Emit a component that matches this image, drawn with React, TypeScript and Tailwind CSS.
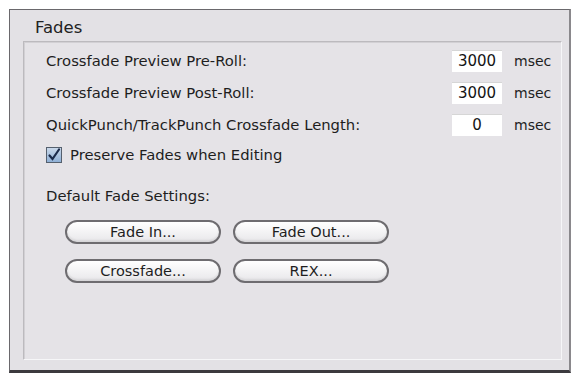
import React from "react";

// Preference rows with numeric fields
const fields = [
  { label: "Crossfade Preview Pre-Roll:", value: "3000" },
  { label: "Crossfade Preview Post-Roll:", value: "3000" },
  { label: "QuickPunch/TrackPunch Crossfade Length:", value: "0" },
];

function PillButton({ label }: { label: string }) {
  return (
    <button className="w-[156px] h-[24px] rounded-full border-2 border-[#6e6c70] bg-gradient-to-b from-white to-[#e8e7ea] text-[14.5px] text-[#1e1e1e] leading-none shadow-[inset_0_-2px_2px_rgba(0,0,0,0.08)]">
      {label}
    </button>
  );
}

export default function App() {
  return (
    <div className="w-[576px] h-[376px] bg-white pt-[9px] pl-[9px] font-['DejaVu_Sans',sans-serif]">
      <div className="w-[562px] h-[364px] bg-[#e3e1e5] border border-[#6a686c] border-b-[3px] border-b-[#3c3a3e] border-r-2 border-r-[#8a888c] pt-[5px] pl-[13px] pr-[7px] pb-[10px] flex flex-col">
        <div className="text-[16.5px] text-[#222] pl-[12px] h-[26px] leading-[26px]">Fades</div>
        <div className="flex-1 border border-[#bcbabe] border-b-[#f6f6f8] border-r-[#f6f6f8] shadow-[inset_1px_1px_0_#d2d0d4] bg-[#e5e3e7] pl-[22px] pr-[9px] pt-[8px]">
          <div className="flex flex-col gap-[10px]">
            {fields.map((f) => (
              <div key={f.label} className="flex items-center h-[22px]">
                <span className="flex-1 text-[14.8px] text-[#1e1e1e] whitespace-nowrap">{f.label}</span>
                <div className="w-[50px] h-[22px] bg-white border-t border-[#d6d6d6] flex items-center justify-center text-[15px] text-[#141414]">
                  {f.value}
                </div>
                <span className="w-[50px] pl-[12px] text-[14px] text-[#1e1e1e]">msec</span>
              </div>
            ))}
          </div>
          <div className="flex items-center mt-[9px] h-[20px]">
            <div className="w-[16px] h-[16px] border border-[#55606e] bg-gradient-to-b from-[#c9d8ea] to-[#8fb0d6] flex items-center justify-center">
              <svg width="14" height="14" viewBox="0 0 14 14">
                <path d="M2.5 7.5 L5.5 11 L12 1.5" stroke="#1a2a4a" strokeWidth="2.2" fill="none" strokeLinecap="round" />
              </svg>
            </div>
            <span className="ml-[8px] text-[14.8px] text-[#1e1e1e]">Preserve Fades when Editing</span>
          </div>
          <div className="mt-[20px] text-[14.8px] text-[#1e1e1e]">Default Fade Settings:</div>
          <div className="mt-[13px] pl-[19px] grid grid-cols-[156px_156px] gap-x-[12px] gap-y-[15px]">
            <PillButton label="Fade In..." />
            <PillButton label="Fade Out..." />
            <PillButton label="Crossfade..." />
            <PillButton label="REX..." />
          </div>
        </div>
      </div>
    </div>
  );
}
